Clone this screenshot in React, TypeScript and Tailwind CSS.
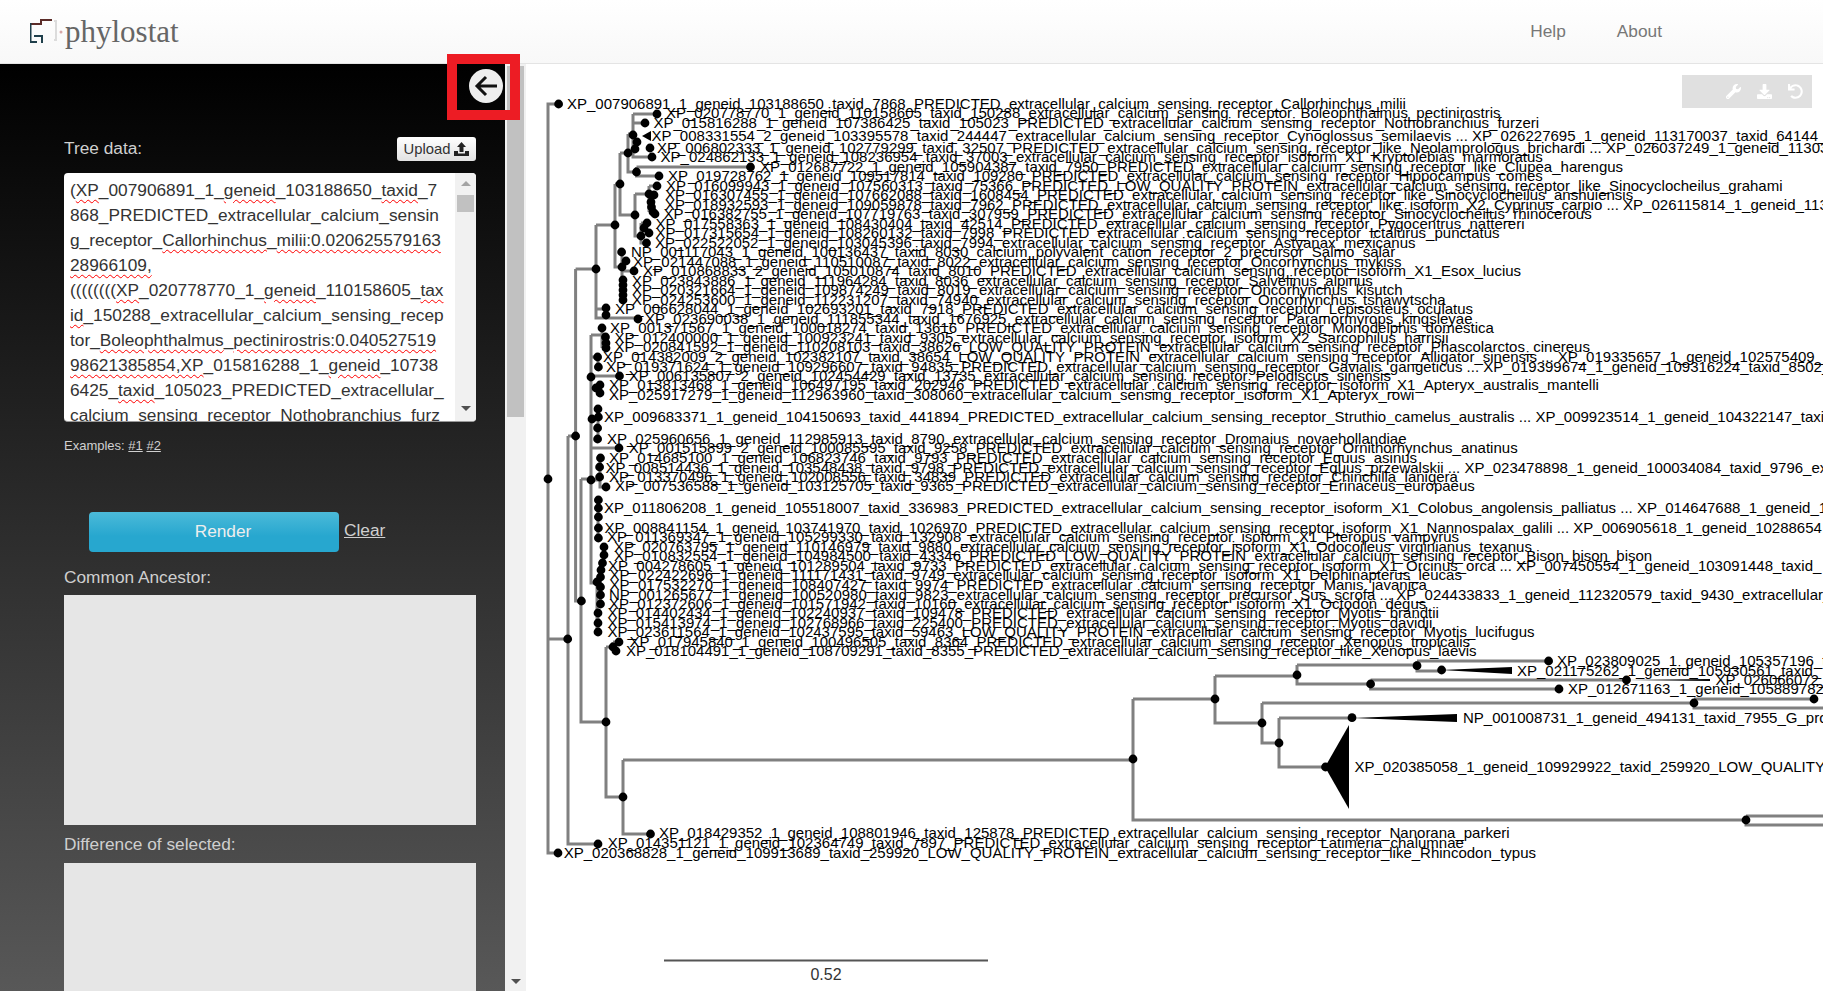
import React from "react";
import { FaWrench, FaDownload, FaUndo } from "react-icons/fa";

const labels: [number, number, string][] = [
  [567, 104, "XP_007906891_1_geneid_103188650_taxid_7868_PREDICTED_extracellular_calcium_sensing_receptor_Callorhinchus_milii"],
  [666, 113, "XP_020778770_1_geneid_110158605_taxid_150288_extracellular_calcium_sensing_receptor_Boleophthalmus_pectinirostris"],
  [653.5, 123, "XP_015816288_1_geneid_107386425_taxid_105023_PREDICTED_extracellular_calcium_sensing_receptor_Nothobranchius_furzeri"],
  [651.5, 136, "XP_008331554_2_geneid_103395578_taxid_244447_extracellular_calcium_sensing_receptor_Cynoglossus_semilaevis ... XP_026227695_1_geneid_113170037_taxid_64144_"],
  [657, 148, "XP_006802333_1_geneid_102779299_taxid_32507_PREDICTED_extracellular_calcium_sensing_receptor_like_Neolamprologus_brichardi ... XP_026037249_1_geneid_113036"],
  [660.6, 157, "XP_024862133_1_geneid_108236954_taxid_37003_extracellular_calcium_sensing_receptor_isoform_X1_Kryptolebias_marmoratus"],
  [760, 167, "XP_012687722_1_geneid_105904387_taxid_7950_PREDICTED_extracellular_calcium_sensing_receptor_like_Clupea_harengus"],
  [668, 176, "XP_019728762_1_geneid_109517814_taxid_109280_PREDICTED_extracellular_calcium_sensing_receptor_Hippocampus_comes"],
  [666, 186, "XP_016099943_1_geneid_107560313_taxid_75366_PREDICTED_LOW_QUALITY_PROTEIN_extracellular_calcium_sensing_receptor_like_Sinocyclocheilus_grahami"],
  [665, 195, "XP_016307455_1_geneid_107662088_taxid_1608454_PREDICTED_extracellular_calcium_sensing_receptor_like_Sinocyclocheilus_anshuiensis"],
  [665, 205, "XP_018932593_1_geneid_109059878_taxid_7962_PREDICTED_extracellular_calcium_sensing_receptor_like_isoform_X2_Cyprinus_carpio ... XP_026115814_1_geneid_113"],
  [663.5, 214, "XP_016382755_1_geneid_107719763_taxid_307959_PREDICTED_extracellular_calcium_sensing_receptor_Sinocyclocheilus_rhinocerous"],
  [655.6, 224, "XP_017558363_1_geneid_108430404_taxid_42514_PREDICTED_extracellular_calcium_sensing_receptor_Pygocentrus_nattereri"],
  [655.6, 233, "XP_017315654_1_geneid_108260132_taxid_7998_PREDICTED_extracellular_calcium_sensing_receptor_Ictalurus_punctatus"],
  [655, 243, "XP_022522052_1_geneid_103045396_taxid_7994_extracellular_calcium_sensing_receptor_Astyanax_mexicanus"],
  [631, 252, "NP_001117043_1_geneid_100136437_taxid_8030_calcium_polyvalent_cation_receptor_2_precursor_Salmo_salar"],
  [633, 262, "XP_021447088_1_geneid_110510087_taxid_8022_extracellular_calcium_sensing_receptor_Oncorhynchus_mykiss"],
  [643, 271, "XP_010868833_2_geneid_105010874_taxid_8010_PREDICTED_extracellular_calcium_sensing_receptor_isoform_X1_Esox_lucius"],
  [632, 281, "XP_023843886_1_geneid_111964284_taxid_8036_extracellular_calcium_sensing_receptor_Salvelinus_alpinus"],
  [632, 290, "XP_020321664_1_geneid_109874249_taxid_8019_extracellular_calcium_sensing_receptor_Oncorhynchus_kisutch"],
  [632, 300, "XP_024253600_1_geneid_112231207_taxid_74940_extracellular_calcium_sensing_receptor_Oncorhynchus_tshawytscha"],
  [615, 309, "XP_006628044_1_geneid_102693201_taxid_7918_PREDICTED_extracellular_calcium_sensing_receptor_Lepisosteus_oculatus"],
  [645, 319, "XP_023690038_1_geneid_111855344_taxid_1676925_extracellular_calcium_sensing_receptor_Paramormyrops_kingsleyae"],
  [610, 328, "XP_001371567_1_geneid_100018274_taxid_13616_PREDICTED_extracellular_calcium_sensing_receptor_Monodelphis_domestica"],
  [614.6, 338, "XP_012400000_1_geneid_100923241_taxid_9305_extracellular_calcium_sensing_receptor_isoform_X2_Sarcophilus_harrisii"],
  [614.6, 347, "XP_020841592_1_geneid_110208103_taxid_38626_LOW_QUALITY_PROTEIN_extracellular_calcium_sensing_receptor_Phascolarctos_cinereus"],
  [603, 357, "XP_014382009_2_geneid_102382107_taxid_38654_LOW_QUALITY_PROTEIN_extracellular_calcium_sensing_receptor_Alligator_sinensis ... XP_019335657_1_geneid_102575409_"],
  [606, 367, "XP_019371624_1_geneid_109296607_taxid_94835_PREDICTED_extracellular_calcium_sensing_receptor_Gavialis_gangeticus ... XP_019399674_1_geneid_109316224_taxid_8502_"],
  [628.7, 376, "XP_006135807_2_geneid_102454429_taxid_13735_extracellular_calcium_sensing_receptor_Pelodiscus_sinensis"],
  [609, 385, "XP_013813468_1_geneid_106497195_taxid_202946_PREDICTED_extracellular_calcium_sensing_receptor_isoform_X1_Apteryx_australis_mantelli"],
  [609, 395, "XP_025917279_1_geneid_112963960_taxid_308060_extracellular_calcium_sensing_receptor_isoform_X1_Apteryx_rowi"],
  [604, 417, "XP_009683371_1_geneid_104150693_taxid_441894_PREDICTED_extracellular_calcium_sensing_receptor_Struthio_camelus_australis ... XP_009923514_1_geneid_104322147_taxid_"],
  [607, 439, "XP_025960656_1_geneid_112985913_taxid_8790_extracellular_calcium_sensing_receptor_Dromaius_novaehollandiae"],
  [628.7, 448, "XP_001515899_2_geneid_100085595_taxid_9258_PREDICTED_extracellular_calcium_sensing_receptor_Ornithorhynchus_anatinus"],
  [609, 458, "XP_014685100_1_geneid_106823746_taxid_9793_PREDICTED_extracellular_calcium_sensing_receptor_Equus_asinus"],
  [605.5, 468, "XP_008514436_1_geneid_103548438_taxid_9798_PREDICTED_extracellular_calcium_sensing_receptor_Equus_przewalskii ... XP_023478898_1_geneid_100034084_taxid_9796_ex"],
  [609, 477, "XP_013370496_1_geneid_102008556_taxid_34839_PREDICTED_extracellular_calcium_sensing_receptor_Chinchilla_lanigera"],
  [615, 486, "XP_007536588_1_geneid_103125705_taxid_9365_PREDICTED_extracellular_calcium_sensing_receptor_Erinaceus_europaeus"],
  [604, 508, "XP_011806208_1_geneid_105518007_taxid_336983_PREDICTED_extracellular_calcium_sensing_receptor_isoform_X1_Colobus_angolensis_palliatus ... XP_014647688_1_geneid_1"],
  [604.6, 528, "XP_008841154_1_geneid_103741970_taxid_1026970_PREDICTED_extracellular_calcium_sensing_receptor_isoform_X1_Nannospalax_galili ... XP_006905618_1_geneid_10288654"],
  [607, 537, "XP_011369347_1_geneid_105299330_taxid_132908_extracellular_calcium_sensing_receptor_isoform_X1_Pteropus_vampyrus"],
  [614, 547, "XP_020763795_1_geneid_110146979_taxid_9880_extracellular_calcium_sensing_receptor_isoform_X1_Odocoileus_virginianus_texanus"],
  [614, 556, "XP_010832554_1_geneid_104984500_taxid_43346_PREDICTED_LOW_QUALITY_PROTEIN_extracellular_calcium_sensing_receptor_Bison_bison_bison"],
  [608, 566, "XP_004278605_1_geneid_101289504_taxid_9733_PREDICTED_extracellular_calcium_sensing_receptor_isoform_X1_Orcinus_orca ... XP_007450554_1_geneid_103091448_taxid_"],
  [609.6, 575, "XP_022422696_1_geneid_111171431_taxid_9749_extracellular_calcium_sensing_receptor_isoform_X1_Delphinapterus_leucas"],
  [609.6, 585, "XP_017532270_1_geneid_108407427_taxid_9974_PREDICTED_extracellular_calcium_sensing_receptor_Manis_javanica"],
  [609, 595, "NP_001265677_1_geneid_100520980_taxid_9823_extracellular_calcium_sensing_receptor_precursor_Sus_scrofa ... XP_024433833_1_geneid_112320579_taxid_9430_extracellular_"],
  [609, 604, "XP_012372606_1_geneid_101571942_taxid_10160_extracellular_calcium_sensing_receptor_isoform_X1_Octodon_degus"],
  [607.5, 613, "XP_014402434_1_geneid_102240937_taxid_109478_PREDICTED_extracellular_calcium_sensing_receptor_Myotis_brandtii"],
  [607.5, 623, "XP_015413974_1_geneid_102768966_taxid_225400_PREDICTED_extracellular_calcium_sensing_receptor_Myotis_davidii"],
  [607.5, 632, "XP_023611564_1_geneid_102437595_taxid_59463_LOW_QUALITY_PROTEIN_extracellular_calcium_sensing_receptor_Myotis_lucifugus"],
  [629.5, 642, "XP_017945840_1_geneid_100496505_taxid_8364_PREDICTED_extracellular_calcium_sensing_receptor_Xenopus_tropicalis"],
  [626, 651, "XP_018104491_1_geneid_108709291_taxid_8355_PREDICTED_extracellular_calcium_sensing_receptor_like_Xenopus_laevis"],
  [1557, 661, "XP_023809025_1_geneid_105357196_taxid_"],
  [1517, 671, "XP_021175262_1_geneid_105930561_taxid_"],
  [1715.5, 680, "XP_026066072_1_geneid_"],
  [1568, 689, "XP_012671163_1_geneid_105889782_"],
  [1463, 718, "NP_001008731_1_geneid_494131_taxid_7955_G_protein_coupled"],
  [1354.5, 767, "XP_020385058_1_geneid_109929922_taxid_259920_LOW_QUALITY_PROTEIN"],
  [659, 833, "XP_018429352_1_geneid_108801946_taxid_125878_PREDICTED_extracellular_calcium_sensing_receptor_Nanorana_parkeri"],
  [607.7, 843, "XP_014351121_1_geneid_102364749_taxid_7897_PREDICTED_extracellular_calcium_sensing_receptor_Latimeria_chalumnae"],
  [563.7, 853, "XP_020368828_1_geneid_109913689_taxid_259920_LOW_QUALITY_PROTEIN_extracellular_calcium_sensing_receptor_like_Rhincodon_typus"],
];

const branches = [
  "M558 104H548V853H558", "M548 639H568", "M568 436V844H598", "M568 436H575.6", "M575.6 269V601H581", "M575.6 269H596",
  "M596 225V318H638", "M596 225H615", "M615 184V267H622", "M615 184H620", "M620 153V215H635", "M620 153H628",
  "M628 134V172H636.5", "M628 134H633", "M633 114V157H652", "M633 114H657", "M633 123H645", "M636.5 167V176H659", "M636.5 167H750",
  "M635 142V149", "M635 194V236H641", "M635 194H649", "M649 186V212", "M649 186H657", "M651 207H655", "M641 223V243H646", "M641 223H647",
  "M622 252V300", "M622 271H634", "M626 261H622", "M596 309H606", "M606 308V315",
  "M591 335V583H597", "M591 448H619", "M591 376H619", "M591 335H602", "M602 328V348", "M602 337H606", "M591 357H598", "M598 357V367",
  "M592 388H600", "M600 385V393", "M592 419H598", "M598 409V439", "M591 480H600", "M600 458V477", "M600 477V487H606",
  "M598 500V538", "M604 547V563", "M600.5 563V604", "M598 613V632", "M597 582V632",
  "M581 479H591", "M581 479V722H606", "M606 647V797H623", "M606 647H613", "M613 642V651", "M613 642H619", "M613 651H616",
  "M623 760V834H650", "M623 760H1133", "M1133 699V820H1746", "M1133 699H1215", "M1746 816H1823", "M1746 816V825H1823",
  "M1215 676V723H1262", "M1215 676H1297", "M1297 665V684H1370", "M1297 665H1417", "M1417 661V671H1441", "M1417 661H1549",
  "M1370.6 680V689H1559", "M1370.6 680H1626", "M1262 703V743H1279", "M1262 703H1694", "M1694 699V708H1823", "M1694 699H1814",
  "M1279 718V767H1325", "M1279 718H1352",
];

const nodes: [number, number][] = [
  [558.6, 104], [657, 114], [645, 123], [633, 135], [637, 142], [650, 148], [635, 149], [652, 157], [628, 153], [750.5, 167], [636.5, 172], [659, 176],
  [620, 184], [657, 186], [649, 194], [654, 195], [651, 202], [651.5, 207], [653, 212], [655, 214], [635, 215], [647, 223], [644, 228], [649, 233], [641, 236],
  [646.5, 243], [615, 225], [621.6, 252], [626, 261], [622, 267], [634, 271], [623, 280], [623, 285], [623, 290], [623, 295], [623, 300], [596, 269],
  [606, 308], [606, 315], [638, 319], [602, 328], [605.5, 337], [606, 343], [606, 348], [597.6, 357], [598.4, 367], [591, 377], [619.5, 376],
  [596, 388], [600, 385], [600, 393], [598, 409], [592, 419], [598.4, 417], [597.6, 428], [597.6, 439], [619, 448], [575.6, 436], [548, 479],
  [600.5, 458], [599.6, 467], [591, 480], [599.6, 477], [606, 487], [598.4, 500], [598.4, 508], [598.4, 517], [598.4, 528], [598.4, 538], [604, 547], [604, 555],
  [602.5, 563], [601, 570], [600.5, 577], [597, 582], [600.5, 587], [600.5, 595], [600.5, 604], [598, 613], [598, 623], [598, 632], [581.4, 601], [567.7, 639],
  [619, 642], [616, 651], [613, 647], [606, 722], [623, 797], [650.5, 834], [598, 844], [558, 853],
  [1133, 759], [1215, 699], [1746, 820], [1297, 675], [1262, 723], [1417, 665.7], [1370.6, 684], [1548.6, 661], [1441.6, 670], [1626.5, 680], [1559, 689],
  [1694, 703], [1814, 699], [1279, 743], [1352, 717.7], [1325.5, 767],
];

const Sq = ({ children }: { children: React.ReactNode }) => (
  <span className="underline decoration-wavy decoration-[#f00] decoration-1 underline-offset-[3px]">{children}</span>
);

const treeLines: React.ReactNode[] = [
  <>(<Sq>XP</Sq>_007906891_1_<Sq>geneid</Sq>_103188650_<Sq>taxid</Sq>_7</>,
  <>868_PREDICTED_extracellular_calcium_sensin</>,
  <>g_receptor_<Sq>Callorhinchus</Sq>_<Sq>milii:0.020625579163</Sq></>,
  <><Sq>28966109,</Sq></>,
  <>((((((((<Sq>XP</Sq>_020778770_1_<Sq>geneid</Sq>_110158605_<Sq>tax</Sq></>,
  <><Sq>id</Sq>_150288_extracellular_calcium_sensing_recep</>,
  <>tor_<Sq>Boleophthalmus</Sq>_<Sq>pectinirostris:0.040527519</Sq></>,
  <><Sq>98621385854,XP</Sq>_015816288_1_<Sq>geneid</Sq>_10738</>,
  <>6425_<Sq>taxid</Sq>_105023_PREDICTED_extracellular_</>,
  <>calcium_sensing_receptor_Nothobranchius_furz</>,
];

const SANS = "font-['Liberation_Sans',Arial,sans-serif]";

export default function App() {
  return (
    <div className={`relative flex h-screen w-full flex-col overflow-hidden bg-white ${SANS}`}>
      <header className="z-10 flex h-[64px] shrink-0 items-center justify-between border-b border-[#e4e4e4] bg-[linear-gradient(to_bottom,#ffffff,#f8f8f8)]">
        <div className="flex items-center pl-[30px]">
          <svg width="35" height="30" viewBox="30 20 35 30" fill="none" strokeWidth="2">
            <path d="M52 23H41V27H31" stroke="#5b2c28" />
            <path d="M30.5 26V45H37" stroke="#1f3f4b" />
            <path d="M34 39H42V46" stroke="#1f3f4b" />
            <path d="M54 24H56V43H54" stroke="#dcdcdc" />
            <circle cx="61" cy="35" r="1.5" fill="#d8a8a8" />
          </svg>
          <span className="font-['Liberation_Serif',serif] text-[31px] leading-none text-[#666]">phylostat</span>
        </div>
        <nav className="flex gap-[51px] pr-[161px] text-[17.3px] text-[#777]">
          <span>Help</span>
          <span>About</span>
        </nav>
      </header>

      <div className="flex min-h-0 flex-1">
        <aside className="flex w-[505px] shrink-0 flex-col overflow-hidden bg-[linear-gradient(to_bottom,#000000,#585858)] pl-[64px] pr-[29px] text-[17.3px] text-[#cfcfcf]">
          <div className="flex justify-end pt-[5px]">
            <button className="-mr-[27px] flex h-[34px] w-[34px] items-center justify-center rounded-full bg-[#eeeeee]">
              <svg width="24" height="22" viewBox="0 0 24 22" fill="none" stroke="#111" strokeWidth="3">
                <path d="M23 11H3M12 2L3 11L12 20" />
              </svg>
            </button>
          </div>
          <div className="mt-[34px] flex h-[24px] items-center justify-between">
            <span>Tree data:</span>
            <button className="flex h-[24px] w-[79px] items-center justify-center gap-[4px] rounded-[3px] bg-[linear-gradient(to_bottom,#ffffff,#e2e2e2)] text-[14.8px] text-[#333]">
              Upload
              <svg width="15" height="14" viewBox="0 0 15 14" fill="#222">
                <path d="M7.5 0L12 5H9.5V10H5.5V5H3Z" />
                <path d="M0 9H4V11.5H11V9H15V14H0Z" />
              </svg>
            </button>
          </div>
          <div className="relative mt-[12px] h-[249px] shrink-0 overflow-hidden rounded-[4px] border-b border-[#999] bg-white pl-[6px] pt-[5px] text-[17.3px] leading-[25px] text-[#333]">
            {treeLines.map((l, i) => (
              <div key={i} className="whitespace-nowrap">{l}</div>
            ))}
            <div className="absolute bottom-0 right-0 top-0 flex w-[21px] flex-col items-center bg-[#f1f1f1]">
              <div className="mt-[8px] h-0 w-0 border-x-[5px] border-b-[5px] border-x-transparent border-b-[#a3a3a3]" />
              <div className="mt-[9px] h-[17px] w-[17px] bg-[#c1c1c1]" />
              <div className="mb-[10px] mt-auto h-0 w-0 border-x-[5px] border-t-[5px] border-x-transparent border-t-[#505050]" />
            </div>
          </div>
          <div className="mt-[15px] text-[13px] leading-[18px] text-[#d0d0d0]">
            Examples: <span className="underline">#1</span> <span className="underline">#2</span>
          </div>
          <div className="ml-[25px] mt-[57px] flex items-center gap-[5px]">
            <button className="h-[40px] w-[250px] rounded-[4px] bg-[linear-gradient(to_bottom,#4bbad9,#27a7cf_60%)] pl-[18px] text-[#eeeeee]">
              Render
            </button>
            <span className="-mt-[2px] underline">Clear</span>
          </div>
          <div className="mt-[12px] leading-[26px] text-[#cfcfcf]">Common Ancestor:</div>
          <div className="mt-[5px] h-[230px] shrink-0 bg-[#e6e6e6]" />
          <div className="mt-[6px] leading-[26px] text-[#cfcfcf]">Difference of selected:</div>
          <div className="mt-[6px] min-h-[200px] shrink-0 bg-[#e6e6e6]" />
        </aside>

        <div className="relative flex w-[21px] shrink-0 flex-col items-center bg-[#f1f1f1]">
          <div className="mt-[2px] h-[351px] w-[17px] bg-[#c1c1c1]" />
          <div className="mb-[7px] mt-auto h-0 w-0 border-x-[5px] border-t-[5px] border-x-transparent border-t-[#505050]" />
        </div>

        <main className="relative min-w-0 flex-1 overflow-hidden">
          <svg width="1297" height="927" viewBox="526 64 1297 927" className="block">
            <g fill="none" stroke="#808080" strokeWidth="3">
              {branches.map((d, i) => <path key={i} d={d} />)}
            </g>
            <g fill="#000">
              <polygon points="642,136 651,131 651,141" />
              <polygon points="1441,670 1512,667 1512,674" />
              <polygon points="1626,680 1710,679 1710,681" />
              <polygon points="1352,718 1457,714 1457,722" />
              <polygon points="1325,767 1349,725 1349,809" />
              {nodes.map(([x, y], i) => <circle key={i} cx={x} cy={y} r="4.4" />)}
            </g>
            <g fontFamily="'Liberation Sans', Arial, sans-serif" fontSize="15" fill="#000">
              {labels.map(([x, y, t], i) => (
                <text key={i} x={x} y={y + 5}>{t}</text>
              ))}
              <text x="826" y="980" textAnchor="middle" fontSize="16" fill="#333">0.52</text>
            </g>
            <path d="M664 960.5H988" stroke="#555" strokeWidth="2" />
          </svg>
          <div className="absolute right-[11px] top-[11px] flex h-[33px] w-[130px] items-center justify-end gap-[16px] bg-[#e0e0e0] pr-[9px] text-white">
            <FaWrench size={15} />
            <FaDownload size={15} />
            <FaUndo size={15} />
          </div>
        </main>
      </div>

      <div className="pointer-events-none absolute left-[447px] top-[54px] z-20 h-[66px] w-[73px] border-[10px] border-[#ed1c24]" />
    </div>
  );
}
